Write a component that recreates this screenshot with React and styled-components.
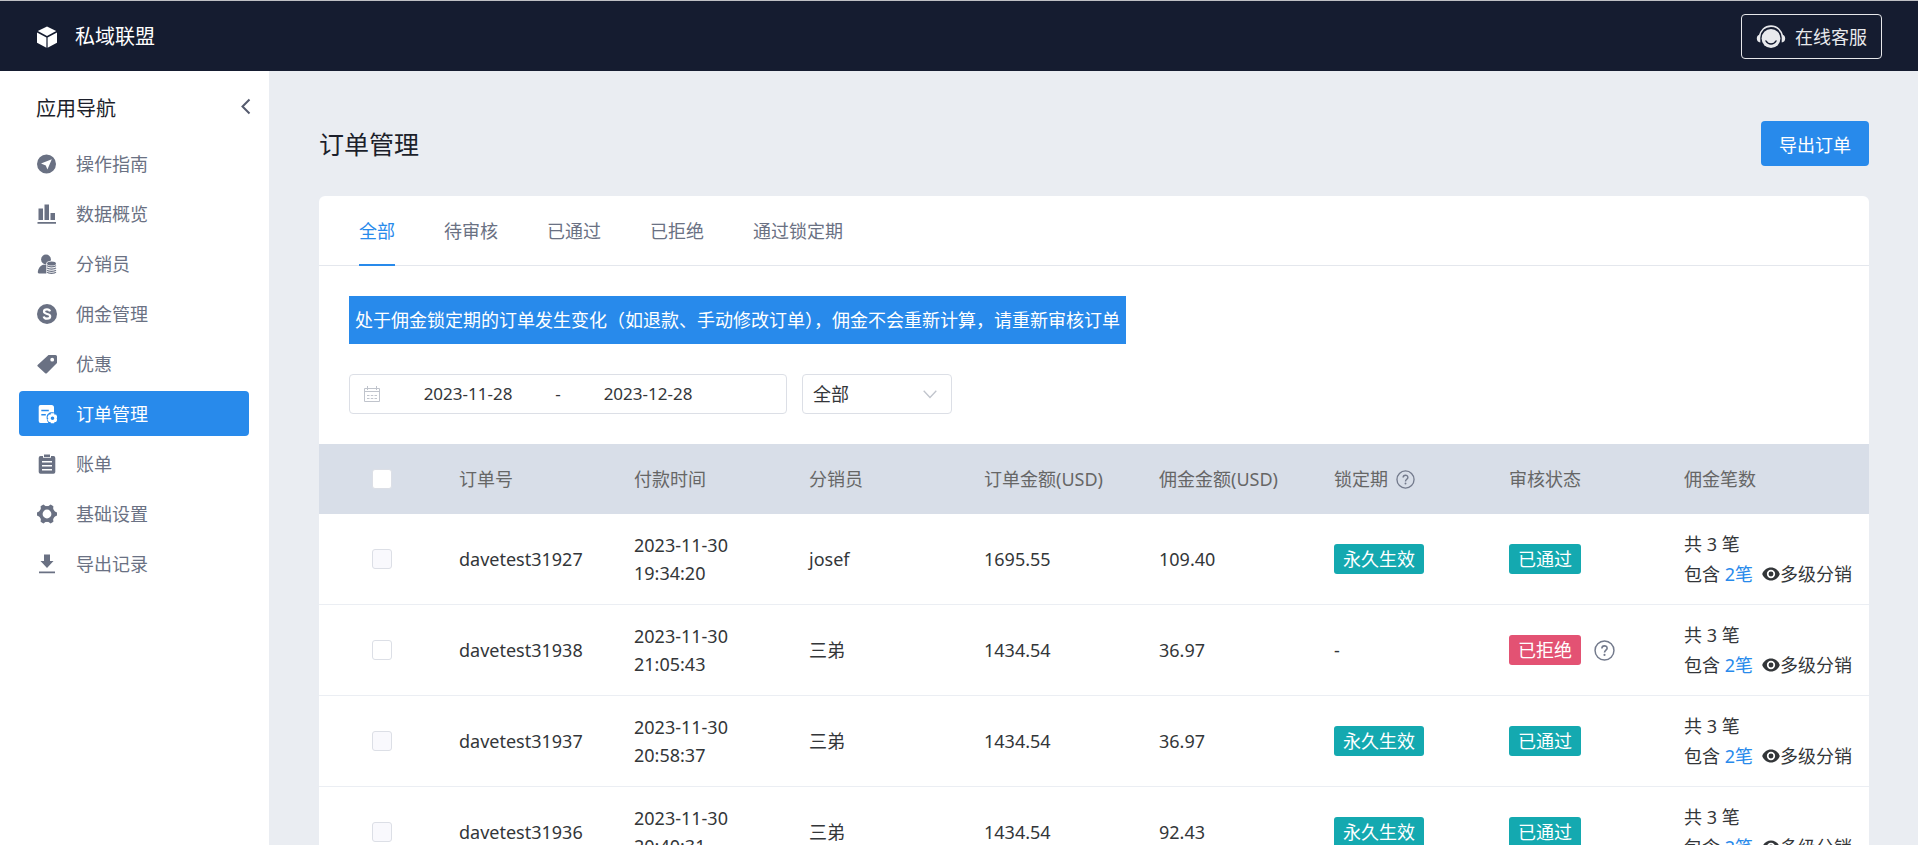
import React from 'react'
import styled, { createGlobalStyle } from 'styled-components'

const COLORS = {
  primary: '#288aeb',
  dark: '#151c30',
  page: '#eaedf2',
  menu: '#6a7183',
  title: '#1c1f2b',
  text: '#333639',
  thead: '#d8dee8',
  theadText: '#666666',
  line: '#ebeef3',
  border: '#dcdfe6',
  pass: '#14a9b0',
  reject: '#e35273',
}

const GlobalStyle = createGlobalStyle`
  * {
    box-sizing: border-box;
  }
  body {
    margin: 0;
    background-color: ${COLORS.page};
    color: ${COLORS.text};
    font-family: "Noto Sans", "Noto Sans CJK SC", sans-serif;
    font-size: 18px;
    font-weight: 400;
    line-height: 28px;
  }
  button, input, select {
    font: inherit;
  }
`

const Page = styled.div`
  display: flex;
  flex-direction: column;
  height: 100vh;
`

const Header = styled.header`
  display: flex;
  flex-shrink: 0;
  align-items: center;
  justify-content: space-between;
  height: 71px;
  padding: 1px 36px 0 37px;
  border-top: 1px solid #bfc0c4;
  background-color: ${COLORS.dark};
  color: white;
`

const Brand = styled.div`
  display: flex;
  align-items: center;
  gap: 18px;
  font-size: 20px;
  line-height: 30px;
`

const ServiceButton = styled.button`
  display: flex;
  align-items: center;
  gap: 9px;
  height: 45px;
  padding: 0 14px;
  border: 1px solid #e6e7ea;
  border-radius: 4px;
  background-color: transparent;
  color: #e8e9ec;
  cursor: pointer;
`

const Body = styled.div`
  display: flex;
  flex: 1;
  min-height: 0;
`

const Sidebar = styled.aside`
  flex-shrink: 0;
  width: 269px;
  background-color: white;
`

const SidebarTop = styled.div`
  display: flex;
  align-items: flex-start;
  justify-content: space-between;
  padding: 23px 16px 17px 36px;
  color: ${COLORS.title};

  h2 {
    margin: 0;
    font-size: 20px;
    font-weight: 400;
    line-height: 30px;
  }
`

const CollapseButton = styled.button`
  display: flex;
  padding: 4px 0 0;
  border: 0;
  background-color: transparent;
  color: #555b6e;
  cursor: pointer;
`

const Menu = styled.nav`
  display: flex;
  flex-direction: column;
  gap: 5px;
  padding: 0 20px 0 19px;
`

const MenuItem = styled.a`
  display: flex;
  align-items: center;
  gap: 19px;
  height: 45px;
  padding-left: 18px;
  border-radius: 4px;
  background-color: ${(props) => (props.$active ? COLORS.primary : 'transparent')};
  color: ${(props) => (props.$active ? 'white' : COLORS.menu)};
  text-decoration: none;
`

const Main = styled.main`
  flex: 1;
  min-width: 0;
  padding: 50px 49px 0 50px;
  overflow-y: auto;
  scrollbar-width: none;
`

const TitleRow = styled.div`
  display: flex;
  align-items: center;
  justify-content: space-between;
  margin-bottom: 30px;

  h1 {
    margin: 0;
    color: ${COLORS.title};
    font-size: 25px;
    font-weight: 400;
  }
`

const ExportButton = styled.button`
  height: 45px;
  padding: 2px 18px 0;
  border: 0;
  border-radius: 4px;
  background-color: ${COLORS.primary};
  color: white;
  cursor: pointer;
`

const Card = styled.section`
  border-radius: 6px 6px 0 0;
  background-color: white;
`

const Tabs = styled.div`
  display: flex;
  gap: 49px;
  height: 70px;
  padding: 0 40px;
  border-bottom: 1px solid #e4e7ed;
`

const Tab = styled.button`
  height: 70px;
  padding: 2px 0 0;
  border: 0;
  border-bottom: 2px solid ${(props) => (props.$active ? COLORS.primary : 'transparent')};
  background-color: transparent;
  color: ${(props) => (props.$active ? COLORS.primary : COLORS.menu)};
  cursor: pointer;
`

const Filters = styled.div`
  display: flex;
  flex-direction: column;
  align-items: flex-start;
  gap: 30px;
  padding: 30px;
`

const Notice = styled.p`
  margin: 0;
  padding: 10px 6px;
  background-color: ${COLORS.primary};
  color: white;
`

const FilterRow = styled.div`
  display: flex;
  gap: 15px;
`

const DateRange = styled.div`
  display: flex;
  align-items: center;
  width: 438px;
  height: 40px;
  padding: 0 13px;
  border: 1px solid ${COLORS.border};
  border-radius: 4px;
  font-size: 17px;

  svg {
    margin-right: 7px;
  }
`

const DateInput = styled.input`
  width: 160px;
  padding: 0;
  border: 0;
  outline: 0;
  background-color: transparent;
  color: ${COLORS.text};
  text-align: center;
`

const DateSeparator = styled.span`
  width: 20px;
  text-align: center;
`

const SelectBox = styled.div`
  position: relative;
  width: 150px;

  select {
    width: 100%;
    height: 40px;
    padding: 0 10px;
    border: 1px solid ${COLORS.border};
    border-radius: 4px;
    background-color: white;
    color: ${COLORS.text};
    appearance: none;
  }

  svg {
    position: absolute;
    top: 16px;
    right: 15px;
    pointer-events: none;
  }
`

const Table = styled.table`
  width: 100%;
  border-collapse: separate;
  border-spacing: 0;
  table-layout: fixed;
`

const CheckCol = styled.col`
  width: 125px;
`

const CountCol = styled.col`
  width: 200px;
`

const Th = styled.th`
  height: 70px;
  padding: 0 15px;
  background-color: ${COLORS.thead};
  color: ${COLORS.theadText};
  font-weight: 400;
  text-align: left;
  white-space: nowrap;
`

const Td = styled.td`
  height: 91px;
  padding: 0 15px;
  border-bottom: 1px solid ${COLORS.line};
`

const Checkbox = styled.input`
  display: block;
  width: 20px;
  height: 20px;
  margin: 0 auto;
  border: 1px solid ${COLORS.border};
  border-radius: 3px;
  background-color: white;
  appearance: none;

  &:disabled {
    background-color: #f9f9fd;
  }
  &:checked {
    background-color: ${COLORS.primary};
  }
`

const WithIcon = styled.span`
  display: flex;
  align-items: center;
  gap: ${(props) => props.$gap}px;
`

const Tag = styled.span`
  display: inline-block;
  padding: 0 9px;
  border-radius: 3px;
  background-color: ${(props) => (props.$rejected ? COLORS.reject : COLORS.pass)};
  color: white;
  line-height: 30px;
`

const CountLine = styled.div`
  display: flex;
  align-items: center;
  line-height: 30px;
  white-space: pre;

  a {
    color: ${COLORS.primary};
    text-decoration: none;
  }
  svg {
    margin-left: 9px;
  }
`

const CubeIcon = () => (
  <svg width="20" height="22" viewBox="0 0 20 22" fill="currentColor">
    <path d="M10 .5l9.2 4.6L10 10 .8 5.1z" />
    <path d="M0 6.4l9.4 5v10.3L0 16.8z" />
    <path d="M20 6.4l-9.4 5v10.3l9.4-4.9z" />
  </svg>
)

const ServiceIcon = () => (
  <svg width="30" height="24" viewBox="0 0 30 24" fill="none">
    <circle cx="15" cy="13.5" r="9.4" fill="currentColor" />
    <path d="M3.2 12C4.500 5.500 9 1.200 15 1.200S25.500 5.500 26.800 12" stroke="currentColor" strokeWidth="1.700" />
    <path d="M4.300 9.500v8C2 17.300.800 15.600.800 13.500s1.200-3.700 3.500-4zM25.700 9.500v8c2.300-.2 3.500-1.900 3.500-4s-1.200-3.700-3.500-4z" fill="currentColor" />
    <path d="M10 16c2.300 4 7.700 4 10 0" stroke={COLORS.dark} strokeWidth="1.500" strokeLinecap="round" />
  </svg>
)

const ChevronLeft = () => (
  <svg width="16" height="18" viewBox="0 0 16 18" fill="none" stroke="currentColor" strokeWidth="2">
    <path d="M12.500 1.500L5.500 8.500l7 7" />
  </svg>
)

const MenuSvg = ({ children }) => (
  <svg width="20" height="20" viewBox="0 0 20 20" fill="currentColor" fillRule="evenodd">
    {children}
  </svg>
)

const GuideIcon = () => (
  <MenuSvg>
    <path d="M9.500.500a9.500 9.500 0 1 0 0 19 9.500 9.500 0 0 0 0-19zM14.800 5.200L10.400 15.600 8.800 11.400 4 9.400z" />
  </MenuSvg>
)

const ChartIcon = () => (
  <MenuSvg>
    <path d="M1.500 4.500H6V16H1.500zM7.500.500H12V16H7.500zM13.500 9H18v7h-4.500zM.500 18h18.500v1.800H.500z" />
  </MenuSvg>
)

const SellerIcon = () => (
  <MenuSvg>
    <circle cx="9" cy="5.500" r="4.900" />
    <path d="M6 10.800h6v8.700H2Q.500 19.500.800 17.800C1.400 14.200 3.200 11.800 6 10.800z" />
    <path d="M9.300 9.500C9.300 7.700 11.700 6.700 14.500 6.700s5.200 1 5.200 2.800V20H9.300z" fill="white" />
    <ellipse cx="14.500" cy="9.500" rx="4.500" ry="2" />
    <path
      d="M10 11.600c1.500 1.600 7.500 1.600 9 0M10 13.900c1.500 1.600 7.500 1.600 9 0M10 16.200c1.500 1.600 7.500 1.600 9 0M10 18.200c1.500 1.600 7.500 1.600 9 0"
      fill="none"
      stroke="currentColor"
      strokeWidth="1.200"
    />
  </MenuSvg>
)

const MoneyIcon = () => (
  <MenuSvg>
    <circle cx="10" cy="10" r="10" />
    <path
      d="M13 7.400C12.600 6 11.500 5.400 10 5.400c-1.700 0-3 .8-3 2.200 0 3.200 6.200 1.500 6.200 4.700 0 1.500-1.400 2.400-3.200 2.400-1.700 0-3-.7-3.300-2.200"
      fill="none"
      stroke="white"
      strokeWidth="2.200"
    />
  </MenuSvg>
)

const DiscountIcon = () => (
  <MenuSvg>
    <path d="M11.500 1H18.500Q20 1 20 2.500V9L9.800 19.200Q9 20 8.200 19.200L.6 12.300Q0 11.600.6 10.900zM15.200 3.800a1.900 1.900 0 1 0 0 3.800 1.900 1.900 0 0 0 0-3.800z" />
  </MenuSvg>
)

const OrderIcon = () => (
  <MenuSvg>
    <path d="M3.500 1H14.500Q17 1 17 3.500V8.600C13 7.500 9.700 9.700 9.600 13.300c0 2 .6 3.500 1.700 5.700H3.500Q1.700 19 1.700 17V3Q1.700 1 3.500 1zM4.300 5.800v1.500h7.500V5.800zM4.300 10v1.500h4.500V10z" />
    <path d="M13.900 9.300h3.200l.5 1.400 1.500-.2 1.400 2.700-1 1.100 1 1.100-1.400 2.700-1.500-.2-.5 1.400h-3.200l-.5-1.400-1.500.2-1.500-2.700 1-1.100-1-1.100 1.500-2.700 1.500.2zM15.500 12.500a1.800 1.800 0 1 0 0 3.600 1.800 1.800 0 0 0 0-3.600z" />
  </MenuSvg>
)

const BillIcon = () => (
  <MenuSvg>
    <path d="M6 2V3.800h8V2h2.500Q18.300 2 18.300 4V18Q18.300 19.800 16.500 19.800H3.500Q1.700 19.800 1.700 18V4Q1.700 2 3.500 2zM5 7v1.400h10V7zM5 11v1.400h10V11zM5 15v1.400h10V15z" />
    <path d="M7 .5h6V3H7z" />
  </MenuSvg>
)

const GearIcon = () => (
  <MenuSvg>
    <circle cx="10" cy="10" r="6.200" fill="none" stroke="currentColor" strokeWidth="3.600" />
    {[0, 60, 120].map((angle) => (
      <path
        key={angle}
        transform={`rotate(${angle} 10 10)`}
        d="M3.500 6.800L0 8.400v3.200l3.500 1.600zM16.500 6.800L20 8.400v3.200l-3.500 1.600z"
      />
    ))}
  </MenuSvg>
)

const DownloadIcon = () => (
  <MenuSvg>
    <path d="M7 .500h6V7h3.500L10 14 3.500 7H7zM2 17.500h16v1.800H2z" />
  </MenuSvg>
)

const CalendarIcon = () => (
  <svg width="18" height="18" viewBox="0 0 18 18" fill="none" stroke="#c0c4cc">
    <path d="M1.500 3.500h15v13h-15zM1.500 6.500h15M4.500 1v4M13.500 1v4" />
    <path d="M4 10.500h2.500M7.800 10.500h2.500M11.500 10.500H14M4 13.500h2.500M7.800 13.500h2.500M11.500 13.500H14" />
  </svg>
)

const ChevronDown = () => (
  <svg width="14" height="9" viewBox="0 0 14 9" fill="none" stroke="#c0c4cc" strokeWidth="1.300">
    <path d="M.7 .800L7 7.500 13.300.800" />
  </svg>
)

const HelpIcon = ({ size }) => (
  <svg width={size} height={size} viewBox="0 0 20 20" fill="none" stroke="#737a8c">
    <circle cx="10" cy="10" r="9" strokeWidth="1.400" />
    <path d="M7.500 8C7.500 4.800 12.500 4.800 12.500 7.800 12.500 9.600 10 9.800 10 12" strokeWidth="1.500" />
    <circle cx="10" cy="14.200" r="1" fill="#737a8c" stroke="none" />
  </svg>
)

const EyeIcon = () => (
  <svg width="18" height="14" viewBox="0 0 18 14" fill="none">
    <path d="M9 .5C5 .5 1.800 3 .2 7c1.600 4 4.800 6.500 8.800 6.500S16.200 11 17.800 7C16.200 3 13 .5 9 .5z" fill="#333639" />
    <circle cx="9" cy="7" r="3.300" fill="#333639" stroke="white" strokeWidth="1.700" />
  </svg>
)

const menu = [
  { name: '操作指南', Icon: GuideIcon },
  { name: '数据概览', Icon: ChartIcon },
  { name: '分销员', Icon: SellerIcon },
  { name: '佣金管理', Icon: MoneyIcon },
  { name: '优惠', Icon: DiscountIcon },
  { name: '订单管理', Icon: OrderIcon, active: true },
  { name: '账单', Icon: BillIcon },
  { name: '基础设置', Icon: GearIcon },
  { name: '导出记录', Icon: DownloadIcon },
]

const tabs = ['全部', '待审核', '已通过', '已拒绝', '通过锁定期']

const orders = [
  { id: 'davetest31927', date: '2023-11-30', time: '19:34:20', seller: 'josef', amount: '1695.55', commission: '109.40', locked: true },
  { id: 'davetest31938', date: '2023-11-30', time: '21:05:43', seller: '三弟', amount: '1434.54', commission: '36.97', rejected: true },
  { id: 'davetest31937', date: '2023-11-30', time: '20:58:37', seller: '三弟', amount: '1434.54', commission: '36.97', locked: true },
  { id: 'davetest31936', date: '2023-11-30', time: '20:40:31', seller: '三弟', amount: '1434.54', commission: '92.43', locked: true },
]

function OrderRow({ order }) {
  return (
    <tr>
      <Td>
        <Checkbox type="checkbox" aria-label={order.id} disabled={!order.rejected} />
      </Td>
      <Td>{order.id}</Td>
      <Td>
        {order.date}
        <br />
        {order.time}
      </Td>
      <Td>{order.seller}</Td>
      <Td>{order.amount}</Td>
      <Td>{order.commission}</Td>
      <Td>{order.locked ? <Tag>永久生效</Tag> : '-'}</Td>
      <Td>
        <WithIcon $gap={13}>
          <Tag $rejected={order.rejected}>{order.rejected ? '已拒绝' : '已通过'}</Tag>
          {order.rejected && <HelpIcon size={21} />}
        </WithIcon>
      </Td>
      <Td>
        <CountLine>共 3 笔</CountLine>
        <CountLine>
          {'包含 '}
          <a href="#detail">2笔</a>
          <EyeIcon />
          多级分销
        </CountLine>
      </Td>
    </tr>
  )
}

function App() {
  return (
    <Page>
      <GlobalStyle />
      <Header>
        <Brand>
          <CubeIcon />
          <span>私域联盟</span>
        </Brand>
        <ServiceButton type="button">
          <ServiceIcon />
          在线客服
        </ServiceButton>
      </Header>
      <Body>
        <Sidebar>
          <SidebarTop>
            <h2>应用导航</h2>
            <CollapseButton type="button" aria-label="收起">
              <ChevronLeft />
            </CollapseButton>
          </SidebarTop>
          <Menu>
            {menu.map(({ name, Icon, active }) => (
              <MenuItem key={name} href="#menu" $active={active}>
                <Icon />
                {name}
              </MenuItem>
            ))}
          </Menu>
        </Sidebar>
        <Main>
          <TitleRow>
            <h1>订单管理</h1>
            <ExportButton type="button">导出订单</ExportButton>
          </TitleRow>
          <Card>
            <Tabs>
              {tabs.map((name, i) => (
                <Tab key={name} type="button" $active={i === 0}>
                  {name}
                </Tab>
              ))}
            </Tabs>
            <Filters>
              <Notice>处于佣金锁定期的订单发生变化（如退款、手动修改订单），佣金不会重新计算，请重新审核订单</Notice>
              <FilterRow>
                <DateRange>
                  <CalendarIcon />
                  <DateInput type="text" aria-label="开始日期" defaultValue="2023-11-28" />
                  <DateSeparator>-</DateSeparator>
                  <DateInput type="text" aria-label="结束日期" defaultValue="2023-12-28" />
                </DateRange>
                <SelectBox>
                  <select aria-label="状态">
                    <option>全部</option>
                  </select>
                  <ChevronDown />
                </SelectBox>
              </FilterRow>
            </Filters>
            <Table>
              <colgroup>
                <CheckCol />
                <col span="7" />
                <CountCol />
              </colgroup>
              <thead>
                <tr>
                  <Th>
                    <Checkbox type="checkbox" aria-label="全选" />
                  </Th>
                  <Th>订单号</Th>
                  <Th>付款时间</Th>
                  <Th>分销员</Th>
                  <Th>订单金额(USD)</Th>
                  <Th>佣金金额(USD)</Th>
                  <Th>
                    <WithIcon $gap={8}>
                      锁定期
                      <HelpIcon size={19} />
                    </WithIcon>
                  </Th>
                  <Th>审核状态</Th>
                  <Th>佣金笔数</Th>
                </tr>
              </thead>
              <tbody>
                {orders.map((order) => (
                  <OrderRow key={order.id} order={order} />
                ))}
              </tbody>
            </Table>
          </Card>
        </Main>
      </Body>
    </Page>
  )
}

export default App
